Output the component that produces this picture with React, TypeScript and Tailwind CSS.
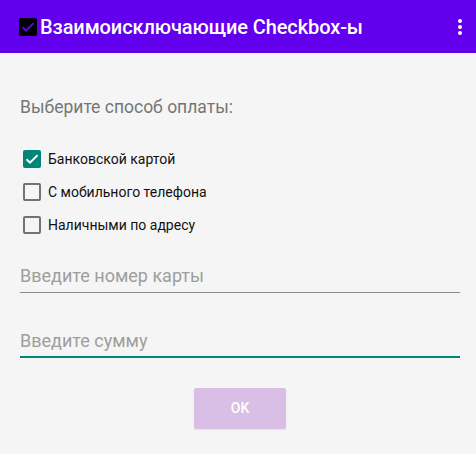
import React from "react";

export default function App() {
  return (
    <div className="w-[476px] h-[454px] bg-[#f5f5f5] flex flex-col" style={{ fontFamily: "Roboto, 'Liberation Sans', sans-serif" }}>
      <div className="h-[53px] bg-[#6200ee] flex items-center pl-[19px] pr-[14px]">
        <svg width="18" height="18" viewBox="0 0 18 18" className="shrink-0">
          <rect x="0" y="0" width="18" height="18" rx="2" fill="#000" />
          <path d="M3.5 9.2 L7 12.6 L14.5 5.2" stroke="#6200ee" strokeWidth="2" fill="none" />
        </svg>
        <div className="ml-[3px] text-white text-[20px] font-medium leading-none tracking-[-0.1px]">Взаимоисключающие Checkbox-ы</div>
        <div className="ml-auto flex flex-col gap-[2px] items-center">
          <span className="w-[4px] h-[4px] rounded-full bg-white" />
          <span className="w-[4px] h-[4px] rounded-full bg-white" />
          <span className="w-[4px] h-[4px] rounded-full bg-white" />
        </div>
      </div>
      <div className="pl-[20px] pr-[16px] pt-[42px]">
        <div className="text-[17.5px] text-[#757575] leading-[24px]">Выберите способ оплаты:</div>
        <div className="mt-[31px] flex flex-col gap-[15px] pl-[3px]">
          {[
            ["Банковской картой", true],
            ["С мобильного телефона", false],
            ["Наличными по адресу", false],
          ].map(([label, checked]) => (
            <div key={label as string} className="flex items-center h-[18px]">
              {checked ? (
                <svg width="18" height="18" viewBox="0 0 18 18">
                  <rect x="0" y="0" width="18" height="18" rx="2" fill="#008577" />
                  <path d="M3.5 9.2 L7 12.6 L14.5 5.2" stroke="#fff" strokeWidth="2" fill="none" />
                </svg>
              ) : (
                <div className="w-[18px] h-[18px] rounded-[2px] border-2 border-[#737373]" />
              )}
              <span className="ml-[7px] text-[14px] text-[#111] leading-none">{label as string}</span>
            </div>
          ))}
        </div>
        <div className="mt-[30px] border-b border-[#8a8a8a] pb-[4px]">
          <div className="text-[18px] text-[#9e9e9e] leading-[24px]">Введите номер карты</div>
        </div>
        <div className="mt-[36px] border-b-2 border-[#008577] pb-[3px]">
          <div className="text-[18px] text-[#9e9e9e] leading-[24px]">Введите сумму</div>
        </div>
        <div className="flex justify-center mt-[30px]">
          <div className="w-[92px] h-[41px] bg-[#d9bfe6] rounded-[2px] flex items-center justify-center text-white text-[14px] font-medium shadow-[0_1px_2px_rgba(0,0,0,0.08)]">OK</div>
        </div>
      </div>
    </div>
  );
}
